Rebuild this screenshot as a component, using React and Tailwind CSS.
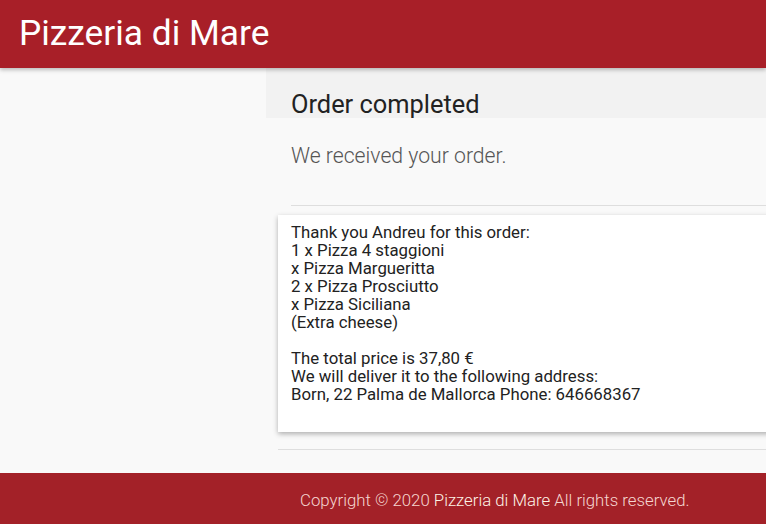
import React from "react";

const lines = [
  "Thank you Andreu for this order:",
  "1 x Pizza 4 staggioni",
  "x Pizza Margueritta",
  "2 x Pizza Prosciutto",
  "x Pizza Siciliana",
  "(Extra cheese)",
];

export default function App() {
  return (
    <div className="min-h-screen bg-[#f9f9f9] font-['Roboto',sans-serif] overflow-hidden">
      <header className="h-[68px] bg-[#a81f28] shadow-[0_2px_4px_rgba(0,0,0,0.25)] relative z-10 flex items-center pl-[19px]">
        <h1 className="text-[35.3px] leading-none text-white font-normal">Pizzeria di Mare</h1>
      </header>

      <div className="flex">
        <aside className="w-[266px] shrink-0" />
        <main className="flex-1 min-w-0">
          <div className="h-[50px] bg-[#f2f2f2] pl-[25px] pt-[22px]">
            <h2 className="text-[25.4px] leading-[28px] text-[#222] whitespace-nowrap">Order completed</h2>
          </div>
          <p className="pl-[25px] pt-[26px] text-[21.2px] leading-[24px] font-light text-[#555] whitespace-nowrap">
            We received your order.
          </p>
          <hr className="ml-[25px] mt-[37px] border-0 border-t border-[#dedede]" />
          <div className="ml-[12px] mt-[9px] -mr-[20px] bg-white shadow-[0_2px_5px_rgba(0,0,0,0.3)] pl-[13px] pt-[8px] h-[217px] text-[16.8px] leading-[18px] text-[#222] whitespace-nowrap">
            {lines.map((l) => (
              <div key={l}>{l}</div>
            ))}
            <div className="h-[18px]" />
            <div>The total price is 37,80 €</div>
            <div>We will deliver it to the following address:</div>
            <div>Born, 22 Palma de Mallorca Phone: 646668367</div>
          </div>
          <hr className="ml-[12px] mt-[17px] border-0 border-t border-[#dedede]" />
        </main>
      </div>

      <footer className="mt-[23px] h-[60px] bg-[#a32128] flex">
        <div className="w-[300px] shrink-0" />
        <p className="pt-[17px] text-[16.8px] leading-[20px] font-light text-[#f5d6d0] whitespace-nowrap">
          Copyright © 2020 <span className="text-[#fdf3e6]">Pizzeria di Mare</span> All rights reserved.
        </p>
      </footer>
    </div>
  );
}
